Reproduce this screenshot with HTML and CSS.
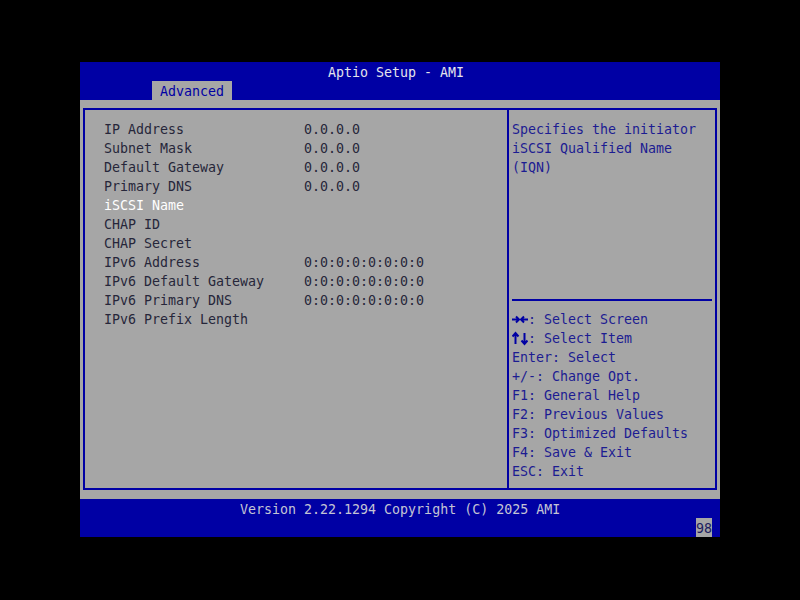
FILE: index.html
```html
<!DOCTYPE html>
<html>
<head>
<meta charset="utf-8">
<link rel="stylesheet" href="styles.css">
</head>
<body>
<div class="screen">
  <div class="topbar">
    <div class="title">Aptio Setup - AMI</div>
    <div class="tabs"><span class="tab">Advanced</span></div>
  </div>
  <div class="main">
    <div class="frame">
      <div class="items">
        <div class="row"><span class="label">IP Address</span><span class="value">0.0.0.0</span></div>
        <div class="row"><span class="label">Subnet Mask</span><span class="value">0.0.0.0</span></div>
        <div class="row"><span class="label">Default Gateway</span><span class="value">0.0.0.0</span></div>
        <div class="row"><span class="label">Primary DNS</span><span class="value">0.0.0.0</span></div>
        <div class="row selected"><span class="label">iSCSI Name</span></div>
        <div class="row"><span class="label">CHAP ID</span></div>
        <div class="row"><span class="label">CHAP Secret</span></div>
        <div class="row"><span class="label">IPv6 Address</span><span class="value">0:0:0:0:0:0:0:0</span></div>
        <div class="row"><span class="label">IPv6 Default Gateway</span><span class="value">0:0:0:0:0:0:0:0</span></div>
        <div class="row"><span class="label">IPv6 Primary DNS</span><span class="value">0:0:0:0:0:0:0:0</span></div>
        <div class="row"><span class="label">IPv6 Prefix Length</span></div>
      </div>
      <div class="side">
        <div class="help">
          <div class="line">Specifies the initiator</div>
          <div class="line">iSCSI Qualified Name</div>
          <div class="line">(IQN)</div>
        </div>
        <div class="keys">
          <div class="line"><svg class="arr" width="16" height="19" viewBox="0 0 16 19"><path d="M0 9.5H7M4 6.5L7 9.5L4 12.5M16 9.5H9M12 6.5L9 9.5L12 12.5" fill="none" stroke="#0000a4" stroke-width="2"/></svg>: Select Screen</div>
          <div class="line"><svg class="arr" width="16" height="19" viewBox="0 0 16 19"><path d="M3.5 15V4M0.5 7.5L3.5 4L6.5 7.5M12.5 4V15M9.5 11.5L12.5 15L15.5 11.5" fill="none" stroke="#0000a4" stroke-width="2"/></svg>: Select Item</div>
          <div class="line">Enter: Select</div>
          <div class="line">+/-: Change Opt.</div>
          <div class="line">F1: General Help</div>
          <div class="line">F2: Previous Values</div>
          <div class="line">F3: Optimized Defaults</div>
          <div class="line">F4: Save &amp; Exit</div>
          <div class="line">ESC: Exit</div>
        </div>
      </div>
    </div>
  </div>
  <div class="footer">
    <div class="version">Version 2.22.1294 Copyright (C) 2025 AMI</div>
    <div class="codes"><span class="code">98</span></div>
  </div>
</div>
</body>
</html>
```
FILE: styles.css
```css
* { box-sizing: border-box; }
html, body {
  margin: 0;
  padding: 0;
  background: #000;
  width: 800px;
  height: 600px;
  overflow: hidden;
}
.screen {
  width: 640px;
  margin: 62px 0 0 80px;
  font-family: "DejaVu Sans Mono", "Liberation Mono", monospace;
  font-size: 13.3px;
  line-height: 19px;
  white-space: nowrap;
}
.topbar {
  background: #0000a4;
  height: 38px;
}
.title {
  height: 19px;
  padding: 1px 0 0 248px;
  color: #e4e4ec;
}
.tabs {
  height: 19px;
  padding-left: 72px;
  display: flex;
}
.tab {
  width: 80px;
  padding: 1px 0 0 8px;
  background: #a6a6a6;
  color: #0000a4;
}
.main {
  background: #a6a6a6;
  height: 399px;
  padding: 8px 3px 9px 3px;
}
.frame {
  height: 382px;
  border: 2px solid #0000a4;
  display: flex;
}
.items {
  width: 422px;
  padding: 10px 0 0 19px;
}
.row {
  display: flex;
  height: 19px;
  color: #26263a;
}
.label { width: 200px; white-space: pre; }
.row.selected { color: #ffffff; }
.side {
  flex: 1;
  border-left: 2px solid #0000a4;
  display: flex;
  flex-direction: column;
  color: #1c1c92;
}
.help {
  height: 189px;
  padding: 10px 0 0 3px;
}
.keys {
  margin-left: 3px;
  width: 200px;
  border-top: 2px solid #0000a4;
  padding-top: 9px;
}
.line { height: 19px; display: flex; white-space: pre; }
.arr { display: block; flex: none; }
.footer {
  background: #0000a4;
  height: 38px;
  color: #c4c4d4;
}
.version {
  height: 19px;
  padding-top: 1px;
  padding-left: 160px;
}
.codes {
  height: 19px;
  padding-left: 616px;
  display: flex;
}
.code {
  width: 16px;
  padding-top: 1px;
  background: #a6a6a6;
  color: #1c1c60;
}
```
